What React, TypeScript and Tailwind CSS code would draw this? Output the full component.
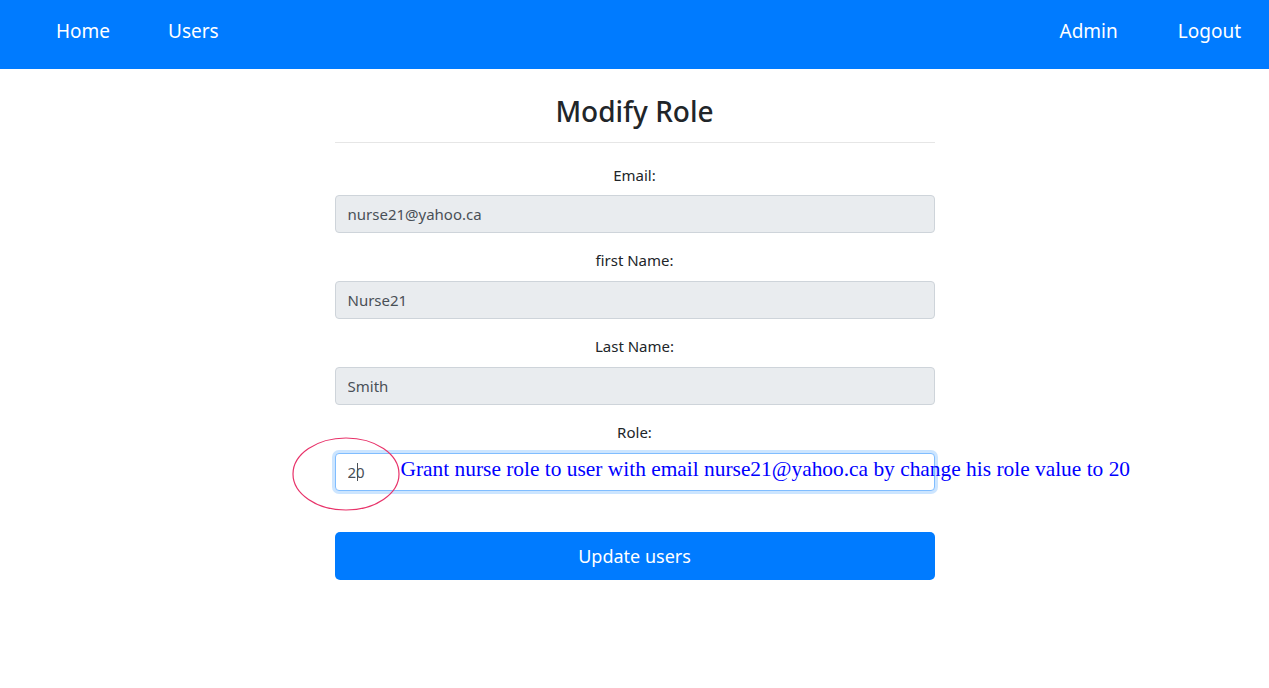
export default function App() {
  const font = { fontFamily: '"Noto Sans", "Open Sans", sans-serif' }
  const readOnlyInput =
    "h-[38px] rounded-[4px] border border-[#ced4da] bg-[#e9ecef] px-[12px] text-[15px] text-[#495057] outline-none"
  return (
    <div className="min-h-screen bg-white text-[#212529]" style={font}>
      <nav className="h-[69px] bg-[#007bff] flex items-center justify-between px-[56px] text-white text-[19px]">
        <div className="flex gap-[58px] -mt-[6px]">
          <a>Home</a>
          <a>Users</a>
        </div>
        <div className="flex gap-[60px] -mt-[6px] -mr-[28px]">
          <a>Admin</a>
          <a>Logout</a>
        </div>
      </nav>

      <div className="w-[600px] mx-auto">
        <h2 className="text-[28px] font-medium text-center mt-[24px] leading-[36px]">Modify Role</h2>
        <hr className="border-[#e6e6e6] mt-[13px] mb-[20px]" />

        <div className="flex flex-col">
          <label className="text-[15px] text-center leading-[24px] mb-[8px]">Email:</label>
          <input readOnly value="nurse21@yahoo.ca" className={readOnlyInput} />

          <label className="text-[15px] text-center leading-[24px] mt-[15px] mb-[9px]">first Name:</label>
          <input readOnly value="Nurse21" className={readOnlyInput} />

          <label className="text-[15px] text-center leading-[24px] mt-[15px] mb-[9px]">Last Name:</label>
          <input readOnly value="Smith" className={readOnlyInput} />

          <label className="text-[15px] text-center leading-[24px] mt-[15px] mb-[9px]">Role:</label>
          <div className="relative">
            <input
              readOnly
              value="20"
              className="w-full h-[38px] rounded-[4px] border border-[#80bdff] bg-white px-[12px] text-[15px] text-[#495057] outline-none shadow-[0_0_0_3px_rgba(0,123,255,0.2)]"
            />
            {/* text caret between the digits */}
            <span className="absolute left-[22px] top-[10px] w-px h-[18px] bg-[#495057]" />
            <span
              className="absolute left-[66px] top-[1px] whitespace-nowrap text-[21.4px] leading-[30px] text-[#0000ff]"
              style={{ fontFamily: '"Liberation Serif", serif' }}
            >
              Grant nurse role to user with email nurse21@yahoo.ca by change his role value to 20
            </span>
            <svg className="absolute -left-[43px] -top-[17px]" width="110" height="76" viewBox="0 0 110 76">
              <ellipse cx="54" cy="38" rx="53" ry="36" fill="none" stroke="#e8336a" strokeWidth="1.2" />
            </svg>
          </div>

          <button className="mt-[41px] h-[48px] rounded-[5px] bg-[#007bff] text-white text-[18px]">
            Update users
          </button>
        </div>
      </div>
    </div>
  )
}
